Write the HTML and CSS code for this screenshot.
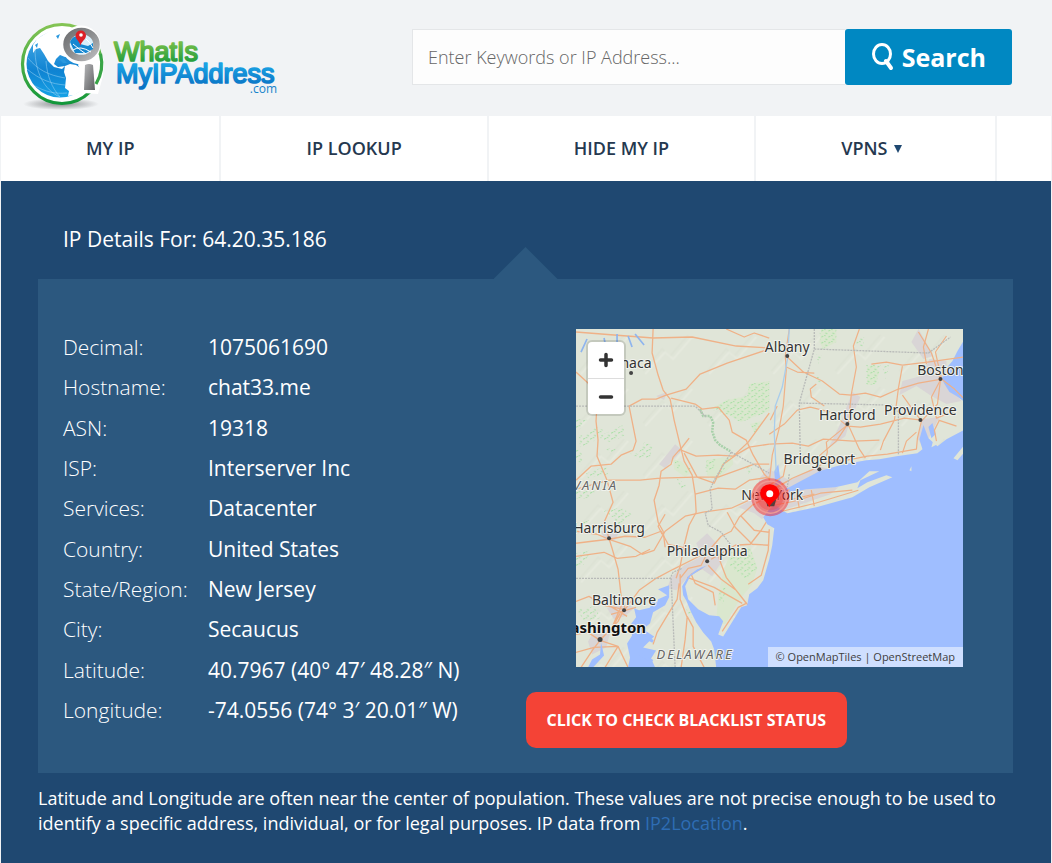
FILE: index.html
```html
<!DOCTYPE html>
<html lang="en">
<head>
<meta charset="utf-8">
<meta name="viewport" content="width=device-width, initial-scale=1">
<title>IP Details For: 64.20.35.186</title>
<link rel="stylesheet" href="styles.css">
</head>
<body>
<header class="site-header">
  <a class="logo" href="#" aria-label="WhatIsMyIPAddress.com">
    <svg class="logo-art" width="264" height="96" viewBox="0 0 264 96" aria-hidden="true">
      <defs>
        <linearGradient id="ring" x1="0" y1="0" x2="0" y2="1"><stop offset="0" stop-color="#84c454"/><stop offset="1" stop-color="#12973a"/></linearGradient>
        <linearGradient id="sea" x1="0" y1="0" x2="0" y2="1"><stop offset="0" stop-color="#4fb0ea"/><stop offset=".6" stop-color="#0f83d2"/><stop offset="1" stop-color="#16a2e6"/></linearGradient>
        <linearGradient id="steel" x1="0" y1="0" x2="1" y2="1"><stop offset="0" stop-color="#6f7072"/><stop offset=".5" stop-color="#8d8e90"/><stop offset="1" stop-color="#b9babc"/></linearGradient>
        <linearGradient id="grip" x1="0" y1="0" x2="1" y2="1"><stop offset="0" stop-color="#b5b6b8"/><stop offset="1" stop-color="#606163"/></linearGradient>
        <linearGradient id="leaf" x1="0" y1="0" x2="0" y2="1"><stop offset="0.2" stop-color="#74bd49"/><stop offset=".9" stop-color="#1a9a3c"/></linearGradient>
        <linearGradient id="sky" x1="0" y1="0" x2="0" y2="1"><stop offset="0.2" stop-color="#1aa3e4"/><stop offset=".9" stop-color="#0a73c4"/></linearGradient>
        <radialGradient id="shade"><stop offset="0" stop-color="#8b8d90"/><stop offset="1" stop-color="#8b8d90" stop-opacity="0"/></radialGradient>
      </defs>
      <ellipse cx="41" cy="90" rx="38" ry="6" fill="url(#shade)"/>
      <circle cx="42" cy="50" r="39.500" fill="#fff" stroke="url(#ring)" stroke-width="3.200"/>
      <circle cx="40" cy="50" r="33.500" fill="url(#sea)"/>
      <path d="M13 31L17 25L23 21L30 17L42 15L50 17L46 22L44 29L52 37L51 43L45 43L40 41L36 45L34 50L38 53L45 52L42 55L34 53L28 47L24 40L20 34L16 35L13 39Z" fill="#fff"/>
      <path d="M45 52L50 50L56 51L62 55L70 58L72 68L63 76L54 81L48 82L49 77L45 74L46 64L44 58Z" fill="#fff"/>
      <path d="M36 22L40 20L38 25ZM39 45L43 44L47 49L43 49ZM15 31L18 29L17 34Z" fill="#2a98de"/>
      <g fill="none" stroke="#9bd2f3" stroke-width=".7" opacity=".75"><path d="M7 55C20 66 32 70 45 71M8 44C18 56 28 61 45 64M15 72C26 78 35 80 47 79M15 35C15 58 24 76 40 83M26 47C27 62 32 74 40 83"/></g>
      <path d="M62 44L74 43L82 40L84 47L83 62L78 80L63 79L63 62L58 51Z" fill="#fff"/>
      <path d="M80.500 40A39.500 39.500 0 0 1 76 70" fill="none" stroke="#38a446" stroke-width="3.200"/>
      <circle cx="61" cy="31" r="19.500" fill="#fff"/>
      <ellipse cx="61.500" cy="30.500" rx="15" ry="13.500" fill="#d9effb" stroke="url(#steel)" stroke-width="6.500"/>
      <path d="M50 28Q52 22 58 22L60 30L68 32L73 29L73 35L66 39L55 39Z" fill="#1688d1"/>
      <path d="M53 36Q60 31 71 38M53 30Q60 36 66 40M66 25Q70 28 73 34" fill="none" stroke="#fff" stroke-width="1"/>
      <path d="M60.500 32C60 27 55.500 26 55.500 21.500A5.200 5 0 0 1 66 21.500C66 26 61 27 60.500 32Z" fill="#dd2027"/>
      <circle cx="61" cy="21" r="1.800" fill="#fff"/>
      <path d="M65 51Q69 49 73 51L75 76L64 76Z" fill="url(#grip)"/>
      <g font-family="Liberation Sans, Arial, sans-serif" stroke-linejoin="round" stroke-width="1.700">
        <text x="94" y="47" font-size="27" fill="url(#leaf)" stroke="url(#leaf)">WhatIs</text>
        <text x="96" y="69" font-size="27" fill="url(#sky)" stroke="url(#sky)">MyIPAddress</text>
      </g>
      <text x="257" y="79" font-size="12" text-anchor="end" font-family="Open Sans, sans-serif" fill="#1683cb">.com</text>
    </svg>
  </a>
  <form class="search" role="search">
    <input class="search-box" type="text" aria-label="Enter Keywords or IP Address" placeholder="Enter Keywords or IP Address...">
    <button class="search-button" type="button">
      <svg width="23" height="28" viewBox="0 0 23 28" aria-hidden="true"><ellipse cx="11" cy="11" rx="8.500" ry="9.500" fill="none" stroke="#fff" stroke-width="3"/><path d="M15 18L20 25" stroke="#fff" stroke-width="4" stroke-linecap="round"/></svg>
      Search
    </button>
  </form>
</header>

<nav class="menu" aria-label="Main">
  <a href="#">MY IP</a>
  <a href="#">IP LOOKUP</a>
  <a href="#">HIDE MY IP</a>
  <a class="has-menu" href="#">VPNS <svg width="8" height="8" viewBox="0 0 8 8" aria-hidden="true"><path d="M0 0H8L4 8Z" fill="#1f4871"/></svg></a>
</nav>

<main class="details">
  <h1>IP Details For: 64.20.35.186</h1>
  <section class="panel">
    <table class="facts">
      <tr><th scope="row">Decimal:</th><td>1075061690</td></tr>
      <tr><th scope="row">Hostname:</th><td>chat33.me</td></tr>
      <tr><th scope="row">ASN:</th><td>19318</td></tr>
      <tr><th scope="row">ISP:</th><td>Interserver Inc</td></tr>
      <tr><th scope="row">Services:</th><td>Datacenter</td></tr>
      <tr><th scope="row">Country:</th><td>United States</td></tr>
      <tr><th scope="row">State/Region:</th><td>New Jersey</td></tr>
      <tr><th scope="row">City:</th><td>Secaucus</td></tr>
      <tr><th scope="row">Latitude:</th><td>40.7967 (40° 47′ 48.28″ N)</td></tr>
      <tr><th scope="row">Longitude:</th><td>-74.0556 (74° 3′ 20.01″ W)</td></tr>
    </table>
    <div class="location">
      <div class="map">
        <svg class="map-art" viewBox="0 0 387 338" role="img" aria-label="Map around New York">
          <defs>
            <pattern id="wood" width="7" height="6" patternUnits="userSpaceOnUse"><path d="M0 2l2-1M4 4l2 1M3 0l1 1" stroke="#a2dfa0" stroke-width="1"/></pattern>
            <pattern id="relief" width="64" height="52" patternUnits="userSpaceOnUse"><path d="M3 42L22 20L30 27L48 6" fill="none" stroke="#d5dccd" stroke-width="2" opacity=".35"/><path d="M5 45L25 23L33 30L52 8" fill="none" stroke="#edf0e6" stroke-width="2" opacity=".4"/></pattern>
          </defs>
          <rect width="387" height="338" fill="#e0e5d8"/>
          <rect width="387" height="338" fill="url(#relief)"/>
          <g fill="#d9d5d6">
            <path d="M180 168L183 150L193 140L213 151L242 137L254 140L226 155L213 159L262 158L254 165L222 176L202 182L193 176L186 190L178 184L162 178Z"/>
            <path d="M95 248L108 236L126 227L120 214L131 204L142 216L147 230L136 247L123 238L111 249L100 261L91 259Z"/>
            <path d="M252 119L263 97L276 63L284 68L274 91L269 107ZM326 52L345 47L353 30L370 32L370 55L385 72L370 75L355 67L340 57L323 66ZM346 90L363 88L355 104L347 119L341 109ZM335 13L342 0L350 14L357 27L347 30Z"/>
            <path d="M19 300L35 300L30 318L16 325L12 312ZM31 279L47 271L58 279L49 287L38 290ZM83 135L99 115L106 121L89 139ZM184 148L195 137L194 162L181 160ZM25 202L43 203L39 211L28 210ZM80 67L91 63L88 71Z"/>
          </g>
          <g fill="#dae7ce"><path d="M134 80L151 71L171 67L173 55L193 52V82L184 85L165 93L142 80ZM148 239L156 220L174 218L181 239L176 255L163 271L149 295L140 294L142 266ZM291 38L298 35L303 43L299 55L291 56ZM130 131L156 127L157 135L141 151L131 146ZM174 95L186 92L179 105ZM245 0L260 0L260 13L247 20L243 13ZM97 130L105 132L115 143L109 148L98 140Z"/></g>
          <g fill="url(#wood)"><path d="M134 80L151 71L171 67L173 55L193 52V82L165 93ZM153 236L156 220L174 218L181 239L170 250ZM143 262L150 255L147 275L142 270ZM0 90L12 91L3 101L0 100ZM3 107L13 103L20 98L28 101L18 112L4 118ZM25 106L47 96L49 106L35 113L24 110ZM28 118L40 120L35 125ZM54 121L62 125L68 113L77 116L74 128L65 129L55 126ZM130 131L140 129L137 140L129 143ZM147 130L156 127L141 151ZM0 118L7 126L6 136L0 130ZM10 144L30 137L32 145L12 149ZM0 161L22 162L12 169L0 169ZM27 182L44 178L56 185L42 197L37 188ZM0 194L16 190L8 202L0 205ZM0 224L15 221L8 235L0 240ZM0 280L19 277L24 289L8 291ZM290 36L304 36L300 55L290 56ZM306 38L313 36L309 50ZM243 0L260 0L260 13L245 20ZM280 9L288 8L287 18L280 16ZM174 95L186 92L179 105ZM169 137L177 136L173 146ZM240 25L246 27L242 35ZM240 45L247 54L240 53ZM98 131L105 133L102 142ZM107 141L115 138L111 145ZM100 148L110 156L106 163ZM110 280L116 281L115 289Z"/></g>
          <path d="M124 80L127 87L134 87L137 93L136 102L139 111L144 116L154 122" fill="none" stroke="#a7d0a9" stroke-width="2.500" stroke-dasharray="2 1"/>
          <g fill="none" stroke="#efb187" stroke-width="1.300" stroke-linejoin="round">
            <path d="M0 3L38 6L77 9L116 8L160 17L193 19M150 0L168 8L178 4L193 9M77 0L76 24L82 46L87 61L94 70L98 91L104 116L108 132L116 146L119 165L120 183L113 196L108 216L104 237L100 249"/>
            <path d="M0 43L12 54L21 75L20 92L22 111L21 127L31 151L37 173L28 193L36 219L42 240L45 266L49 279M0 151L15 137L35 135L45 126L57 121L60 112L53 77L66 70L80 70L90 66L110 60L124 45L151 34L193 20M95 69L119 75L126 80L142 78L153 91L156 103L170 111L177 126L188 145L193 150"/>
            <path d="M104 120L97 128L95 135L85 142L83 156L78 171L82 193L87 202L89 218M103 122L113 109M105 121L120 127L142 126L157 127L172 113L193 84M161 125L173 118L193 115M161 125L147 135L138 154L121 148L108 124M0 160L33 151L64 151L84 149L119 148L142 148L178 135L193 135M119 165L142 159L159 160L173 151L193 148"/>
            <path d="M0 202L21 205L33 210L54 217L66 225L78 221L89 202L109 187L127 183L155 179L175 170M0 214L16 212L33 210L49 207L69 208L85 202L92 215L125 222M0 227L28 223L41 229L60 227L74 220M125 226L97 240L80 249L63 261L49 280M0 272L13 267L28 276L48 280M5 338L17 320L24 311L42 292L47 282M0 305L12 303L24 311L42 317L52 338M0 323L18 318L42 317L29 338M23 311L36 299L44 284M35 285L60 278M33 276L51 287M49 268L36 298"/>
            <path d="M104 245L104 270L111 288L109 310L105 338M103 254L101 270L90 288L81 303L77 315M111 287L117 298L117 317L128 338M104 249L112 239L125 236L132 222L145 207L155 202L163 188L176 176L193 167M126 239L115 245L119 254L137 263L139 276M132 236L145 250L160 261L172 276M142 227L150 248L170 274L162 278L146 302M135 230L159 216L174 215L185 201L193 188M172 255L185 246L192 221L193 200M111 248L138 258L166 274M151 183L159 198L176 215L193 216M165 187L178 201L193 203M89 185L82 197L86 205"/>
          </g>
          <path d="M387 12L381 22L376 32L370 39L371 44L365 49L368 55L373 63L380 67L387 72V338H140L138 320L135 312L127 303L120 293L115 283L110 271L107 266L106 257L112 247L121 240L131 236L114 247L109 257L112 270L122 280L133 286L143 287L147 292L142 305L147 307L157 291L165 278L171 276L173 265L181 259L187 251L193 230L196 216L198 199L191 195L187 188L193 180L199 175L204 180L211 184L240 178L276 168L293 158L316 148L310 146L291 153L281 159L284 151L303 142L293 142L281 153L259 158L230 160L210 164L203 162L213 158L226 151L243 142L260 137L273 134L290 131L303 130L320 127L341 124L346 120L343 110L347 96L352 109L361 117L370 110L387 101V12Z" fill="#9fbeff"/>
          <path d="M352 98L356 94L359 105L355 109ZM198 142L202 135L205 158L199 155ZM93 256L82 260L91 266L82 270L80 277L63 281L58 279L60 288L54 296L56 306L51 314L54 328L52 338H79L75 329L80 321L67 318L78 307L67 300L74 294L77 283L89 276L93 268ZM25 313L24 325L16 330L12 338H17L28 326Z" fill="#9fbeff"/>
          <path d="M75 280L78 271L81 280M67 307L77 312M64 325L75 331L70 338" fill="none" stroke="#9fbeff" stroke-width="3"/>
          <g fill="#e0e5d8"><path d="M377 129L387 117V124L381 131ZM333 141L335 137L335 142ZM355 118L358 106L361 115Z"/></g>
          <g fill="none" stroke="#efb187" stroke-width="1.200" stroke-linejoin="round">
            <path d="M193 176L200 159L216 149L235 141L251 132L266 132L291 127L311 125L340 120L341 109L345 92L361 75L364 51L355 24L342 3M370 7L359 23L365 50L378 60L387 69M193 153L196 126L203 99L207 77L210 41L209 27L213 0M211 28L227 43L246 52L263 65L275 66L289 64L304 68L322 60L342 54L365 50M210 38L221 43L238 44M283 0L277 17L280 38L275 65L272 94L260 112L246 124L234 135"/>
            <path d="M295 35L310 33L326 36L351 33L387 28M326 37L322 59L318 91L307 112L304 121M364 51L355 68L360 89L378 82M193 105L208 95L221 81L234 78L254 83L271 97L284 98L304 95L328 89L345 91M240 55L234 60L235 68L248 77M272 95L250 113L251 123L249 132M272 96L283 120L289 129M193 115L216 114L232 117L247 110L277 112L303 111M326 124L330 112L340 103M363 91L358 101L360 112M362 91L380 97M345 92L336 80L326 66M193 177L218 172L244 164L276 161M206 182L239 174L282 161M201 170L216 170L238 165M220 163L223 179M235 161L238 177M193 162L201 157L211 152M196 176L213 160M193 156L207 147L211 128M201 77L194 91M352 0L347 18L350 35"/>
          </g>
          <g fill="none" stroke="#b8bab8" stroke-width="1.300" stroke-dasharray="2 1"><path d="M0 77H119L130 88M155 123L193 144M155 123L138 151L134 160L136 180L129 184L132 196L145 203L154 215M0 249H94L97 243L106 239M95 249L99 338M238 0L238 20L223 74L224 127M224 74L315 76L322 83V125M238 20L352 24L374 8M213 145L211 158"/></g>
          <path d="M11 10L5 23M41 5V13M28 9L29 14M52 7L56 18M59 5L68 16" fill="none" stroke="#8fb5ee" stroke-width="1.700"/>
          <path d="M213 0L211 31L206 58L199 77L198 104L200 143" fill="none" stroke="#a9cdec" stroke-width="1.300"/>
          <g class="place-dot"><circle cx="55" cy="44" r="2"/><circle cx="211" cy="27" r="2"/><circle cx="364" cy="50" r="2"/><circle cx="271" cy="95" r="2"/><circle cx="344" cy="91" r="2"/><circle cx="243" cy="140" r="2"/><circle cx="33" cy="209" r="2"/><circle cx="131" cy="232" r="2"/><circle cx="48" cy="281" r="2"/><circle cx="24" cy="310" r="2.500"/></g>
          <g class="place">
            <text x="55" y="39" text-anchor="middle">Ithaca</text><text x="211" y="23" text-anchor="middle">Albany</text><text x="364" y="46" text-anchor="middle">Boston</text><text x="271" y="91" text-anchor="middle">Hartford</text><text x="344" y="86" text-anchor="middle">Providence</text><text x="243" y="135" text-anchor="middle">Bridgeport</text><text x="196" y="171" text-anchor="middle">New York</text><text x="33" y="204" text-anchor="middle">Harrisburg</text><text x="131" y="227" text-anchor="middle">Philadelphia</text><text x="48" y="276" text-anchor="middle">Baltimore</text>
            <text class="capital" x="70" y="304" text-anchor="end">Washington</text>
            <text class="region" x="42" y="161" text-anchor="end">PENNSYLVANIA</text><text class="region" x="119" y="330" text-anchor="middle">DELAWARE</text>
          </g>
          <circle cx="194" cy="168" r="19" fill="#f00" opacity=".4"/>
          <circle cx="194" cy="168" r="16" fill="none" stroke="#ee9a94" stroke-width="1.500"/>
          <circle cx="194" cy="168" r="13" fill="#e55" opacity=".5"/>
          <path d="M190 172L200 170L198 177H191Z" fill="#333" opacity=".8"/>
          <path d="M193 178C191 172 184 170 184 164A9.500 9 0 0 1 203 164C203 170 195 172 193 178Z" fill="#f00"/>
          <circle cx="193.500" cy="164.500" r="3.500" fill="#fff"/>
        </svg>
        <div class="zoom">
          <button type="button" aria-label="Zoom in"><svg width="16" height="16" viewBox="0 0 16 16" aria-hidden="true"><path d="M8 2.500V13.500M2.500 8H13.500" stroke="#333" stroke-width="3.500" stroke-linecap="round"/></svg></button>
          <button type="button" aria-label="Zoom out"><svg width="16" height="16" viewBox="0 0 16 16" aria-hidden="true"><path d="M2.500 8H13.500" stroke="#333" stroke-width="3.500" stroke-linecap="round"/></svg></button>
        </div>
        <div class="credits"><a href="#">© OpenMapTiles</a> | <a href="#">OpenStreetMap</a></div>
      </div>
      <button class="blacklist" type="button">CLICK TO CHECK BLACKLIST STATUS</button>
    </div>
  </section>
  <p class="note">Latitude and Longitude are often near the center of population. These values are not precise enough to be used to identify a specific address, individual, or for legal purposes. IP data from <a href="#">IP2Location</a>.</p>
</main>
</body>
</html>
```

FILE: styles.css
```css
* { box-sizing: border-box; }

body {
  margin: 0;
  background: #f1f3f5;
  color: #fff;
  font-family: "Open Sans", "Noto Sans", sans-serif;
}

a { color: inherit; text-decoration: none; }
button, input { font: inherit; }
button { cursor: pointer; }
svg { display: block; }

.site-header {
  display: flex;
  justify-content: space-between;
  align-items: flex-start;
  gap: 24px;
  padding: 14px 40px 6px 20px;
}

.logo { flex: none; }

.search {
  display: flex;
  flex: 0 1 600px;
  min-width: 0;
  margin-top: 15px;
}

.search-box {
  flex: 1;
  min-width: 0;
  height: 56px;
  padding: 0 15px;
  border: 1px solid #e4e6e8;
  border-right: 0;
  background: #fdfdfd;
  color: #444;
  font-size: 18px;
  font-weight: 300;
}

.search-box::placeholder { color: #666; opacity: 1; }

.search-button {
  display: flex;
  align-items: center;
  gap: 8px;
  height: 56px;
  padding: 0 26px;
  border: 0;
  border-radius: 3px;
  background: #0088c2;
  color: #fff;
  font-size: 25px;
  font-weight: 700;
}

.menu {
  display: flex;
  margin: 0 1px;
  background: #fff;
  color: #25384f;
  font-size: 18px;
  font-weight: 600;
  line-height: 65px;
}

.menu a {
  padding: 0 85px;
  border-right: 2px solid #f1f3f5;
  white-space: nowrap;
}

.menu .has-menu {
  display: flex;
  align-items: center;
  gap: 7px;
  padding-right: 93px;
}

.details {
  margin: 0 1px;
  padding: 42px 38px 27px 37px;
  background: #1f4871;
}

.details h1 {
  margin: 0 25px 24px;
  font-size: 21px;
  font-weight: 400;
  line-height: 32px;
}

.panel {
  position: relative;
  display: grid;
  grid-template-columns: 1fr 1fr;
  padding: 48px 0 25px;
  background: #2c587f;
}

.panel::before {
  content: "";
  position: absolute;
  bottom: 100%;
  left: 50%;
  width: 64px;
  height: 32px;
  margin-left: -32px;
  background: #2c587f;
  clip-path: polygon(50% 0, 100% 100%, 0 100%);
}

.facts {
  align-self: start;
  height: 403px;
  margin-left: 25px;
  border-collapse: collapse;
  font-size: 21px;
  text-align: left;
}

.facts th {
  width: 145px;
  padding: 0;
  font-weight: 300;
}

.facts td { padding: 0; }

.location { padding-top: 2px; }

.map {
  position: relative;
  margin: 0 50px 25px;
  overflow: hidden;
}

.map-art { width: 100%; height: auto; }

.place {
  fill: #333;
  stroke: #f0f2ec;
  stroke-width: 2px;
  stroke-linejoin: round;
  paint-order: stroke;
  font-family: "Noto Sans", sans-serif;
  font-size: 14px;
}

.place-dot { fill: #444; }
.capital { fill: #111; font-size: 15px; font-weight: 700; }
.region { fill: #666; font-size: 13px; font-style: italic; letter-spacing: 2px; }

.zoom {
  position: absolute;
  top: 13px;
  left: 12px;
  display: grid;
  width: 36px;
  border-radius: 4px;
  background: #fff;
  box-shadow: 0 0 0 2px rgba(0, 0, 0, 0.12);
}

.zoom button {
  display: grid;
  place-items: center;
  height: 36px;
  padding: 0;
  border: 0;
  background: none;
}

.zoom button + button { border-top: 1px solid #ddd; }

.credits {
  position: absolute;
  right: 0;
  bottom: 0;
  padding: 0 8px;
  background: rgba(255, 255, 255, 0.5);
  color: #404040;
  font-size: 11px;
  line-height: 20px;
}

.blacklist {
  display: block;
  height: 56px;
  padding: 0 21px;
  border: 0;
  border-radius: 10px;
  background: #f44336;
  color: #fff;
  font-size: 16px;
  font-weight: 700;
}

.note {
  margin: 13px 0 0;
  font-size: 18px;
  line-height: 25px;
}

.note a { color: #2e6db4; }
```
